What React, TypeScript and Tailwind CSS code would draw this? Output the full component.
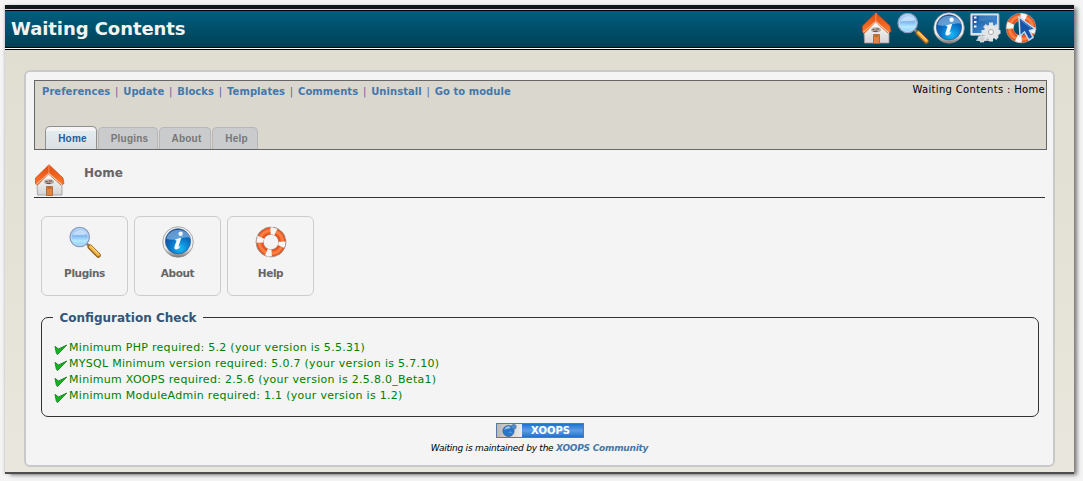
import React from 'react';

type IconProps = { className?: string };

const House = ({ className = 'size-8' }: IconProps) => (
  <svg viewBox="0 0 32 32" className={className}>
    <defs>
      <linearGradient id="wall" x1="0" y1="0" x2="0" y2="1">
        <stop offset="0" stopColor="#ffffff" />
        <stop offset="1" stopColor="#d4d4d4" />
      </linearGradient>
      <linearGradient id="roof" x1="0" y1="0" x2="0" y2="1">
        <stop offset="0" stopColor="#e04a10" />
        <stop offset="1" stopColor="#ff7a2c" />
      </linearGradient>
    </defs>
    <path d="M3 20 L14 8 L28 20 V31 H3.500 Z" fill="url(#wall)" stroke="#999" strokeWidth="0.8" />
    <path d="M15 .7 L1.500 14 V20 L3.500 21 L14.500 10 L27 21 L30 19.500 L29 14 Z" fill="url(#roof)" stroke="#c44a18" strokeWidth="0.7" />
    <path d="M15 1 L14.800 9 L27.500 20" fill="none" stroke="#ffa06a" strokeWidth="0.8" />
    <path d="M2 20.500 L14.500 9.500 L28 20.800" fill="none" stroke="#f6e5dc" strokeWidth="0.8" />
    <ellipse cx="15" cy="17.800" rx="5" ry="2.500" fill="#b4aaa2" />
    <path d="M11.500 17.500h2M15 17h3M12.500 19.300h4" stroke="#6b5348" strokeWidth="1.200" />
    <path d="M12.500 31.500V22.500h6V31.500Z" fill="#e08440" stroke="#a95c2a" strokeWidth="0.8" />
    <path d="M13.500 24h4" stroke="#a94d1c" />
  </svg>
);

const Magnifier = ({ className = 'size-8' }: IconProps) => (
  <svg viewBox="0 0 32 32" className={className}>
    <defs>
      <linearGradient id="glass" x1="0" y1="0" x2="0" y2="1">
        <stop offset="0" stopColor="#b4d4f6" />
        <stop offset="0.45" stopColor="#84b8f0" />
        <stop offset="0.7" stopColor="#b4eaff" />
        <stop offset="1" stopColor="#8ac8f4" />
      </linearGradient>
    </defs>
    <path d="M17.500 17.500 L21 21" stroke="#858585" strokeWidth="2.500" />
    <path d="M21 21 L29.300 29.300" stroke="#9a6420" strokeWidth="5" strokeLinecap="round" />
    <path d="M21.300 20.700 L29.300 28.700" stroke="#f2b53c" strokeWidth="3" strokeLinecap="round" />
    <path d="M21.800 20.200 L29 27.500" stroke="#ffe49a" strokeWidth="1" />
    <circle cx="10.700" cy="11" r="9.700" fill="url(#glass)" stroke="#8b9cc0" strokeWidth="1.300" />
    <circle cx="10.700" cy="11" r="8.500" fill="none" stroke="#c0dcf8" strokeWidth="0.8" />
    <path d="M3.500 9.500C5 3.500 16 2 18 8C14 10 9 8 3.500 9.500Z" fill="#d8ecff" opacity=".65" />
  </svg>
);

const Info = ({ className = 'size-8' }: IconProps) => (
  <svg viewBox="0 0 32 32" className={className}>
    <defs>
      <linearGradient id="ring" x1="0" y1="0" x2="0" y2="1">
        <stop offset="0" stopColor="#f4f4f4" />
        <stop offset="0.7" stopColor="#eeeeee" />
        <stop offset="1" stopColor="#777777" />
      </linearGradient>
      <radialGradient id="blue" cx=".6" cy=".8" r=".8">
        <stop offset="0" stopColor="#16b8f6" />
        <stop offset="0.55" stopColor="#0870c4" />
        <stop offset="1" stopColor="#0a4794" />
      </radialGradient>
    </defs>
    <circle cx="16" cy="16" r="15.300" fill="url(#ring)" stroke="#888" strokeWidth="0.7" />
    <circle cx="16" cy="15.300" r="12.600" fill="url(#blue)" stroke="#33578a" strokeWidth="0.7" />
    <path d="M4.500 13C6 1.500 25 0 28 12C23 9 14 16 4.500 13Z" fill="#9cc4ea" opacity=".6" />
    <circle cx="18.600" cy="7.800" r="2.200" fill="#f4f8fc" />
    <path d="M12.500 13.800C15 13 17 11.500 19.200 12L16.500 20.500C17 21 17.800 20 18.800 19.300C17.500 22.500 15.500 24 13.500 23.500C11.500 22.800 12.600 20 14.600 14.800Z" fill="#f4f8fc" />
  </svg>
);

const LifeRing = ({ className = 'size-8' }: IconProps) => (
  <svg viewBox="0 0 32 32" className={className}>
    <circle cx="16" cy="16" r="11.200" fill="none" stroke="#a39c99" strokeWidth="7.800" />
    <circle cx="16" cy="16" r="11.200" fill="none" stroke="#e95520" strokeWidth="6.800" />
    <circle cx="16" cy="16" r="11.600" fill="none" stroke="#fb7f43" strokeWidth="3" />
    <g transform="rotate(10 16 16)">
      <circle cx="16" cy="16" r="11.200" fill="none" stroke="#f5f5f5" strokeWidth="7.200" strokeDasharray="5.600 11.993" strokeDashoffset="2.800" />
    </g>
    <circle cx="16" cy="16" r="14.900" fill="none" stroke="#8f8884" strokeWidth="0.7" strokeDasharray="7 2" />
  </svg>
);

const Cursor = ({ className }: IconProps) => (
  <svg viewBox="0 0 20 25" className={className}>
    <path d="M2 1 L3 20 L7.500 16 L12 24 L16 21.500 L12.500 14.500 L18 13 Z" fill="#1753a6" stroke="#c4dbf1" strokeWidth="1.500" />
    <path d="M3.500 4 L14 12" stroke="#5993d3" strokeWidth="1" />
  </svg>
);

const SystemOptions = ({ className = 'size-8' }: IconProps) => (
  <svg viewBox="0 0 32 32" className={className}>
    <defs>
      <linearGradient id="screen" x1="0" y1="0" x2="1" y2="1">
        <stop offset="0" stopColor="#124f9c" />
        <stop offset="1" stopColor="#4aa2dc" />
      </linearGradient>
    </defs>
    <path d="M10 23h10l3 6H7Z" fill="#aebcc8" />
    <rect x="1.500" y="1.500" width="28.500" height="22" rx="1" fill="#d9e3eb" stroke="#8fa3b5" />
    <rect x="3.500" y="3.500" width="24.500" height="17.500" fill="url(#screen)" />
    <path d="M5 5.500h2.500M5 10h2.500M5 14.500h2.500" stroke="#f1f5f8" strokeWidth="2.200" />
    <path d="M10 4h17v4C20 7 15 10 10 9Z" fill="#5390ca" opacity=".5" />
    <g stroke="#dfe2e5" strokeWidth="4">
      <path d="M22 10.500v19M12.500 20h19M15.500 13.500l13 13M15.500 26.500l13-13" />
    </g>
    <circle cx="22" cy="20" r="7.200" fill="#e3e5e7" />
    <circle cx="22" cy="20" r="2.500" fill="#f9f9f9" stroke="#a7acb1" />
    <circle cx="13" cy="27" r="3" fill="#ccd0d3" stroke="#e8e8e8" strokeWidth="1.500" strokeDasharray="1.5 1" />
  </svg>
);

const Check = () => (
  <svg viewBox="0 0 14 12" className="mt-1 h-3 w-3.5 shrink-0">
    <path d="M1 2.300 L4.500 5 L12.800 1 L6.800 7.200 L3.500 10.600 L2.300 9 Z" fill="#12b51c" stroke="#247b2c" strokeWidth="0.9" />
  </svg>
);

const Globe = () => (
  <svg viewBox="0 0 25 13" className="h-[13px] w-[25px]">
    <circle cx="11.500" cy="7" r="5.600" fill="#2977ca" stroke="#365d91" strokeWidth=".7" />
    <path d="M7.500 6C8 2.500 11 1.500 13.500 3C12 6 10 4 7.500 6Z" fill="#9bc6ed" />
    <path d="M12 8.500c2-1 3 0 3.500 1" stroke="#67a8e4" fill="none" />
    <circle cx="16.800" cy="2.800" r="2.400" fill="#4c8dd1" stroke="#466b99" strokeWidth=".7" />
  </svg>
);

const links = ['Preferences', 'Update', 'Blocks', 'Templates', 'Comments', 'Uninstall', 'Go to module'];

const tabs = [
  { label: 'Plugins', width: 'w-[60px]' },
  { label: 'About', width: 'w-[52px]' },
  { label: 'Help', width: 'w-[46px]' },
];

const cards = [
  { label: 'Plugins', Icon: Magnifier },
  { label: 'About', Icon: Info },
  { label: 'Help', Icon: LifeRing },
];

const checks = [
  'Minimum PHP required: 5.2 (your version is 5.5.31)',
  'MYSQL Minimum version required: 5.0.7 (your version is 5.7.10)',
  'Minimum XOOPS required: 2.5.6 (your version is 2.5.8.0_Beta1)',
  'Minimum ModuleAdmin required: 1.1 (your version is 1.2)',
];

const Header = () => (
  <header className="flex h-[45px] shrink-0 flex-col">
    <div className="h-1 bg-[#12191d]" />
    <div className="h-px bg-[#d5dadc]" />
    <div className="flex h-[38px] items-center justify-between border-y border-black bg-linear-to-b from-[#005f80] to-[#004055] pl-1.5 pr-[37px]">
      <h1 className="text-[18px] font-bold leading-none tracking-[-0.07px] whitespace-nowrap text-[#f3f3f3]">Waiting Contents</h1>
      <div className="-mt-0.5 flex gap-1">
        <House />
        <Magnifier />
        <Info />
        <SystemOptions />
        <div className="relative">
          <LifeRing />
          <Cursor className="absolute left-3 top-1 h-[25px] w-5" />
        </div>
      </div>
    </div>
    <div className="h-px bg-white" />
    <div className="h-px bg-black" />
  </header>
);

const Toolbar = () => (
  <nav className="flex h-[70px] w-[1013px] flex-col justify-between border border-[#666] bg-[#dad7cf]">
    <div className="flex justify-between pl-[7px] pr-px">
      <div className="flex pt-[3px] text-[10px] font-bold leading-[15px] tracking-[0.05px] text-[#4477aa]">
        {links.map((link, i) => (
          <React.Fragment key={link}>
            {i > 0 && <span className="w-[13px] text-center font-normal text-[#5b62a0]">|</span>}
            <a className="whitespace-nowrap">{link}</a>
          </React.Fragment>
        ))}
      </div>
      <div className="pt-px text-[10px] leading-[15px] tracking-[0.33px] whitespace-nowrap text-black">Waiting Contents : Home</div>
    </div>
    <div className="flex items-end gap-px pl-2.5 font-['Liberation_Sans',sans-serif] text-[10px] font-bold tracking-[0.2px]">
      <a className="flex h-[23px] w-[52px] items-center justify-center rounded-t-[5px] border border-b-0 border-[#909090] bg-linear-to-b from-[#f5f5f5] from-20% via-[#e2ebee] via-20% to-[#dbdfe4] pl-[3px] text-[#245d99]">Home</a>
      {tabs.map((tab) => (
        <a key={tab.label} className={`${tab.width} flex h-[22px] items-center justify-center rounded-t-[5px] border border-b-0 border-[#b7b7b7] bg-[#c9cbcd] pl-[3px] text-[#777]`}>{tab.label}</a>
      ))}
    </div>
  </nav>
);

export default function App() {
  return (
    <div className="h-[481px] w-[1083px] overflow-hidden bg-[#f4f4f4] pl-[5px] pt-[5px] font-['DejaVu_Sans',Verdana,sans-serif]">
      <div className="flex h-[469px] w-[1069px] flex-col border-b-2 border-[#4c4e4c] bg-linear-to-b from-[#dfddd0] to-[#e9e6dd] shadow-[4px_2px_4px_-1px_#777,-1px_0_2px_#ccc]">
        <Header />
        <main className="ml-[19px] mt-5 flex h-[397px] w-[1031px] flex-col rounded-[6px] border-2 border-[#c9c9c9] bg-[#f4f4f4] pl-2 pt-2">
          <Toolbar />
          <div className="flex h-12 w-[1011px] shrink-0 border-b border-[#333] pt-3.5">
            <House />
            <h2 className="ml-[18px] mt-px text-[12px] font-bold leading-[16px] tracking-[0px] text-[#666]">Home</h2>
          </div>
          <div className="ml-[7px] mt-[18px] flex gap-1.5">
            {cards.map(({ label, Icon }) => (
              <a key={label} className="flex h-20 w-[87px] flex-col items-center rounded-[6px] border border-[#ccc] pt-[9px] text-[10.5px] font-bold leading-[16px] tracking-[-0.4px] text-[#666]">
                <Icon />
                <span className="mt-[7px]">{label}</span>
              </a>
            ))}
          </div>
          <div className="ml-[7px] mt-[21px] flex h-[100px] w-[998px] shrink-0 flex-col rounded-[7px] border border-[#333]">
            <div className="-mt-2 ml-[11px] flex h-4 w-[150px] items-center justify-center bg-[#f4f4f4] text-[12px] font-bold whitespace-nowrap text-[#335577]">Configuration Check</div>
            <div className="ml-3 mt-3.5 flex flex-col">
              {checks.map((check) => (
                <div key={check} className="flex h-4 gap-px text-[11px] leading-[16px] tracking-[0.29px] text-[#007f00]">
                  <Check />
                  <span className="whitespace-nowrap">{check}</span>
                </div>
              ))}
            </div>
          </div>
          <footer className="flex w-[1011px] flex-col items-center">
            <div className="mt-1.5 flex h-[15px] w-[88px] border border-[#557aa9] bg-linear-to-r from-[#b8b8b8] to-[#eeeeee] to-30%">
              <Globe />
              <div className="flex flex-1 items-center justify-center bg-linear-to-b from-[#1873d1] via-[#5d9ce4] to-[#1873d1] pr-[3px] text-[10px] font-bold leading-none text-white">XOOPS</div>
            </div>
            <p className="mt-1 text-[9px] italic leading-[13px] tracking-[-0.24px] whitespace-nowrap text-black">
              Waiting is maintained by the <a className="font-bold text-[#4477aa]">XOOPS Community</a>
            </p>
          </footer>
        </main>
      </div>
    </div>
  );
}
